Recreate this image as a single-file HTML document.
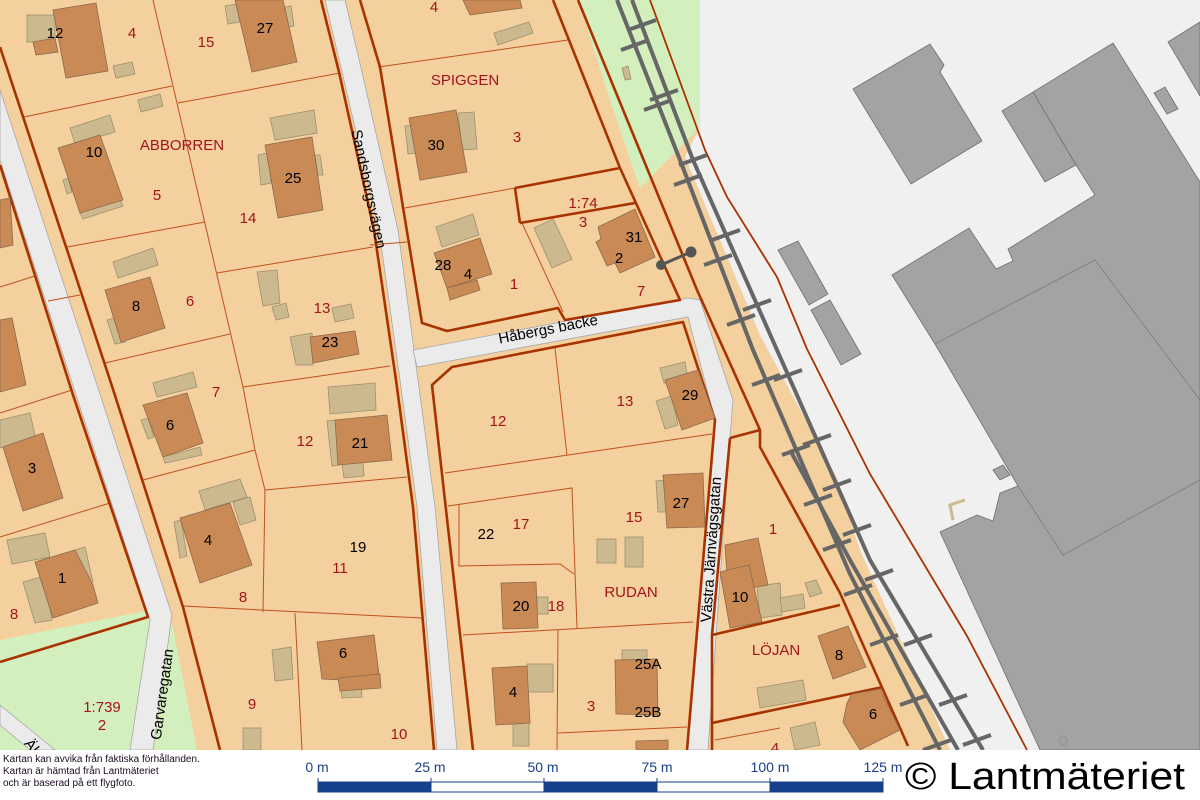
<!DOCTYPE html>
<html><head><meta charset="utf-8"><style>
html,body{margin:0;padding:0;background:#fff;width:1200px;height:800px;overflow:hidden}
svg{display:block}
.r{fill:#a3141c;font-family:"Liberation Sans",sans-serif;font-size:15px;text-anchor:middle}
.b{fill:#000;font-family:"Liberation Sans",sans-serif;font-size:15px;text-anchor:middle}
.h{fill:#c98a56;stroke:#8c6a4c;stroke-width:.8}
.t{fill:#cdb98e;stroke:#9c9070;stroke-width:.8}
.g{fill:#a3a3a3;stroke:#6e6e6e;stroke-width:.8}
.th{fill:none;stroke:#a83200;stroke-width:2.6;stroke-linejoin:round}
.tn{fill:none;stroke:#c0501e;stroke-width:1}
.rd{fill:#ebebeb;stroke:#a8a8a8;stroke-width:.8}
.tr{fill:none;stroke:#666;stroke-width:4;stroke-linejoin:round}
.tie{stroke:#666;stroke-width:4}
</style></head><body>
<svg width="1200" height="800" viewBox="0 0 1200 800" xmlns="http://www.w3.org/2000/svg">
<rect x="0" y="0" width="1200" height="750" fill="#f3d09e"/>
<polygon points="578,0 700,0 700,127 640,188 610,100" fill="#d3efbd"/>
<polygon points="0,640 150,610 172,623 197,750 0,750" fill="#d3efbd"/>
<polygon points="700,0 1200,0 1200,750 950,750 860,550 837,478 760,335 685,157 700,127" fill="#f0f0f0"/>
<polygon class="g" points="853,89 930,44 944,65 940,72 982,141 911,184"/>
<polygon class="g" points="1002,111 1113,43 1200,182 1200,750 1040,750 940,532 977,515 993,521 1000,493 1018,486 935,344 892,275 969,228 996,269 1013,261 1008,249 1095,195 1076,165 1045,182"/>
<polyline points="1033,92 1076,165" fill="none" stroke="#6e6e6e" stroke-width=".8"/>
<polyline points="935,344 1095,260 1200,400" fill="none" stroke="#6e6e6e" stroke-width=".6"/>
<polyline points="1018,486 1063,555 1200,480" fill="none" stroke="#6e6e6e" stroke-width=".6"/>
<polygon class="g" points="1168,42 1200,22 1200,96"/>
<polygon class="g" points="1154,93 1165,87 1178,109 1167,114"/>
<polygon class="g" points="778,250 798,241 828,294 809,305"/>
<polygon class="g" points="811,310 830,300 861,354 841,365"/>
<polygon class="g" points="993,470 1003,465 1010,475 1000,480"/>
<polyline points="953,520 950,505 965,500" fill="none" stroke="#cdb98e" stroke-width="3"/>
<circle cx="1063" cy="741" r="4" fill="none" stroke="#9a9a9a" stroke-width="2.5"/>
<polygon class="rd" points="0,90 97,385 172,615 153,750 130,750 150,620 75,392 0,160"/>
<polygon class="rd" points="0,705 55,750 30,750 0,725"/>
<polygon class="rd" points="325,0 345,0 362,72 398,230 418,380 435,507 457,750 437,750 417,507 400,380 379,230 342,72"/>
<polygon class="rd" points="413,350 688,298 700,300 733,400 730,437 708,750 687,750 715,420 688,317 417,367"/>
<g class="tn">
<polyline points="153,0 243,387 255,450 265,490 263,612"/>
<polyline points="24,117 172,86"/><polyline points="178,103 340,73"/>
<polyline points="67,247 205,222"/><polyline points="217,273 373,247"/>
<polyline points="0,287 35,276"/><polyline points="48,301 80,295"/>
<polyline points="105,363 230,334"/><polyline points="243,387 390,366"/>
<polyline points="0,413 72,390"/><polyline points="0,537 110,503"/>
<polyline points="143,480 255,450"/><polyline points="265,490 407,477"/>
<polyline points="183,606 422,618"/><polyline points="295,613 302,750"/>
<polyline points="378,67 568,40"/><polyline points="405,208 515,188"/>
<polyline points="522,223 563,312"/><polyline points="370,245 407,242"/>
<polyline points="445,473 712,434"/><polyline points="555,348 567,455"/>
<polyline points="448,506 572,488 577,628"/>
<polyline points="459,505 459,566 560,564 574,574"/>
<polyline points="463,635 693,622"/><polyline points="558,630 557,750"/>
<polyline points="558,733 687,727"/>
<polyline points="715,740 780,728"/>
</g>
<g class="th">
<polyline points="0,47 110,380 183,607 220,750"/>
<polyline points="0,165 73,395 148,617 0,662"/>
<polyline points="321,0 339,72 374,230 396,380 413,507 434,750"/>
<polyline points="360,0 380,67 422,323 447,331 558,308 565,320 680,300 620,168 553,0"/>
<polyline points="515,188 620,168"/><polyline points="520,223 635,203"/><polyline points="515,188 520,223"/>
<polyline points="578,0 697,290 760,430 760,447 840,593 908,746"/>
<polyline points="473,750 432,385 452,367 683,322 715,420 687,750"/>
<polyline points="730,438 760,430"/>
<polyline points="730,438 712,635 712,750"/>
<polyline points="712,635 840,605"/><polyline points="712,723 883,687"/>
</g>
<polyline points="650,0 705,150 727,197 777,277 807,349 870,474 967,636 1027,750" fill="none" stroke="#a83200" stroke-width="1.8"/>
<polyline class="tr" points="617,0 680,160 753,350 850,574 940,750"/>
<polyline class="tr" points="632,0 693,160 777,350 870,560 983,750"/>
<polyline class="tr" points="790,450 850,560 958,750"/>
<g class="tie">
<line x1="621" y1="50" x2="649" y2="40"/><line x1="644" y1="110" x2="672" y2="100"/>
<line x1="674" y1="185" x2="702" y2="175"/><line x1="704" y1="265" x2="732" y2="255"/>
<line x1="727" y1="325" x2="755" y2="315"/><line x1="752" y1="385" x2="780" y2="375"/>
<line x1="782" y1="455" x2="810" y2="445"/><line x1="804" y1="505" x2="832" y2="495"/>
<line x1="823" y1="550" x2="851" y2="540"/><line x1="844" y1="595" x2="872" y2="585"/>
<line x1="870" y1="645" x2="898" y2="635"/><line x1="900" y1="705" x2="928" y2="695"/>
<line x1="923" y1="750" x2="951" y2="740"/>
<line x1="628" y1="30" x2="656" y2="20"/><line x1="650" y1="100" x2="678" y2="90"/>
<line x1="679" y1="165" x2="707" y2="155"/><line x1="712" y1="240" x2="740" y2="230"/>
<line x1="743" y1="310" x2="771" y2="300"/><line x1="774" y1="380" x2="802" y2="370"/>
<line x1="803" y1="445" x2="831" y2="435"/><line x1="823" y1="490" x2="851" y2="480"/>
<line x1="843" y1="535" x2="871" y2="525"/><line x1="865" y1="580" x2="893" y2="570"/>
<line x1="904" y1="645" x2="932" y2="635"/><line x1="939" y1="705" x2="967" y2="695"/>
<line x1="963" y1="745" x2="991" y2="735"/>
</g>
<g class="t">
<rect x="27" y="15" width="28" height="27"/><polygon points="113,66 132,62 135,74 116,78"/>
<polygon points="225,6 237,4 240,22 228,24"/><polygon points="285,7 291,6 294,26 288,27"/>
<polygon points="138,100 160,94 163,106 141,112"/>
<polygon points="70,128 110,115 115,132 75,144"/><polygon points="63,180 68,178 72,192 67,194"/>
<polygon points="80,213 120,200 123,206 83,219"/>
<polygon points="270,118 314,110 317,133 275,140"/><polygon points="258,155 268,153 271,183 261,185"/><polygon points="315,155 320,155 323,175 318,175"/>
<polygon points="113,262 153,248 158,265 118,278"/>
<polygon points="107,320 118,317 126,342 115,344"/>
<polygon points="257,272 277,270 280,303 263,306"/><polygon points="272,307 286,303 289,317 276,320"/>
<polygon points="332,308 351,304 354,318 335,322"/>
<polygon points="290,337 312,333 313,365 296,365"/>
<polygon points="494,33 529,22 533,33 498,45"/><polygon points="622,68 628,66 631,79 625,80"/>
<polygon points="458,113 474,112 477,149 462,150"/><polygon points="405,126 414,125 416,153 408,154"/>
<polygon points="436,227 473,214 479,235 442,247"/>
<polygon points="534,228 553,219 572,259 552,268"/>
<polygon points="153,383 193,372 197,387 157,397"/><polygon points="141,420 148,418 154,437 148,439"/>
<polygon points="163,457 200,447 202,455 165,463"/>
<polygon points="0,420 30,413 36,440 0,448"/>
<polygon points="328,387 375,383 376,410 330,414"/><polygon points="327,421 337,420 339,465 332,466"/><polygon points="342,463 363,462 364,476 344,478"/>
<polygon points="7,540 45,533 50,557 12,564"/><polygon points="23,582 45,576 52,620 35,623"/><polygon points="75,550 85,547 93,582 85,584"/>
<polygon points="199,491 240,479 247,497 205,510"/><polygon points="233,502 250,497 256,520 240,525"/><polygon points="174,522 181,520 187,556 180,558"/>
<polygon points="660,368 685,362 688,380 664,383"/><polygon points="656,401 672,396 678,425 665,429"/>
<polygon points="656,481 666,480 667,512 658,512"/>
<rect x="597" y="539" width="19" height="24"/><rect x="625" y="537" width="18" height="30"/>
<rect x="537" y="597" width="11" height="17"/>
<polygon points="272,650 291,647 293,679 275,681"/>
<polygon points="340,685 361,683 362,697 342,698"/>
<rect x="243" y="728" width="18" height="22"/>
<rect x="527" y="664" width="26" height="28"/><rect x="513" y="723" width="16" height="23"/>
<rect x="622" y="650" width="25" height="11"/>
<polygon points="757,586 780,583 782,615 760,618"/><polygon points="780,598 803,594 805,608 782,612"/><polygon points="805,583 816,580 822,593 810,597"/>
<polygon points="757,688 803,680 806,700 760,708"/><polygon points="790,728 815,722 820,745 795,750"/>
</g>
<g class="h">
<polygon points="53,10 96,3 108,71 66,78"/><polygon points="33,42 55,38 58,52 36,55"/>
<polygon points="235,0 283,0 297,62 252,72"/>
<polygon points="0,200 10,198 13,245 0,248"/>
<polygon points="58,148 100,135 123,200 80,213"/>
<polygon points="265,145 312,137 323,210 278,218"/>
<polygon points="409,118 456,110 467,172 420,180"/>
<polygon points="463,0 520,0 522,8 470,15"/>
<polygon points="105,290 150,277 165,328 121,342"/>
<polygon points="0,320 12,318 26,385 0,392"/>
<polygon points="310,337 355,331 359,354 313,363"/>
<polygon points="434,253 480,238 492,274 447,288"/><polygon points="447,288 477,280 480,290 450,300"/>
<polygon points="598,227 635,209 655,257 620,273 615,263 607,266 596,242 601,239"/>
<polygon points="143,405 187,393 203,443 163,457"/>
<polygon points="3,447 43,433 63,498 23,511"/>
<polygon points="335,420 387,415 392,460 338,465"/>
<polygon points="665,380 698,370 715,418 682,430"/>
<polygon points="180,518 230,503 252,565 200,583"/>
<polygon points="35,562 75,550 93,585 98,603 53,618"/>
<polygon points="663,475 703,473 705,527 667,528"/>
<polygon points="501,583 536,582 538,628 503,629"/>
<polygon points="725,545 758,538 768,585 728,592"/><polygon points="720,572 749,565 762,622 730,628"/>
<polygon points="818,636 848,626 866,667 833,679"/>
<polygon points="317,642 374,635 380,682 322,679"/><polygon points="338,678 380,674 381,688 340,691"/>
<polygon points="492,668 527,666 530,723 496,725"/>
<polygon points="615,660 657,659 658,715 616,714"/>
<polygon points="847,703 852,694 880,689 900,730 860,750 843,722"/>
<polygon points="636,741 668,740 668,750 636,750"/>
</g>
<line x1="661" y1="265" x2="691" y2="252" stroke="#555" stroke-width="3"/>
<circle cx="661" cy="265" r="5" fill="#555"/><circle cx="691" cy="252" r="5.5" fill="#555"/>
<text class="b" x="55" y="38">12</text><text class="r" x="132" y="38">4</text><text class="r" x="206" y="47">15</text>
<text class="b" x="265" y="33">27</text><text class="r" x="434" y="12">4</text>
<text class="r" x="465" y="85">SPIGGEN</text><text class="b" x="436" y="150">30</text><text class="r" x="517" y="142">3</text>
<text class="b" x="94" y="157">10</text><text class="r" x="182" y="150">ABBORREN</text><text class="b" x="293" y="183">25</text>
<text class="r" x="157" y="200">5</text><text class="r" x="248" y="223">14</text>
<text class="r" x="583" y="208">1:74</text><text class="r" x="583" y="227">3</text>
<text class="b" x="634" y="242">31</text><text class="b" x="619" y="263">2</text>
<text class="b" x="443" y="270">28</text><text class="b" x="468" y="279">4</text><text class="r" x="514" y="289">1</text>
<text class="b" x="136" y="311">8</text><text class="r" x="190" y="306">6</text><text class="r" x="322" y="313">13</text>
<text class="b" x="330" y="347">23</text><text class="r" x="641" y="296">7</text>
<text class="r" x="498" y="426">12</text><text class="r" x="625" y="406">13</text><text class="b" x="690" y="400">29</text>
<text class="r" x="216" y="397">7</text><text class="b" x="170" y="430">6</text><text class="r" x="305" y="446">12</text>
<text class="b" x="360" y="448">21</text><text class="b" x="32" y="473">3</text>
<text class="b" x="681" y="508">27</text><text class="r" x="634" y="522">15</text><text class="r" x="773" y="534">1</text>
<text class="r" x="521" y="529">17</text><text class="b" x="486" y="539">22</text>
<text class="b" x="208" y="545">4</text><text class="b" x="358" y="552">19</text><text class="r" x="340" y="573">11</text>
<text class="b" x="62" y="583">1</text><text class="r" x="631" y="597">RUDAN</text>
<text class="b" x="521" y="611">20</text><text class="r" x="556" y="611">18</text><text class="b" x="740" y="602">10</text>
<text class="r" x="243" y="602">8</text><text class="r" x="14" y="619">8</text>
<text class="r" x="776" y="655">LÖJAN</text><text class="b" x="839" y="660">8</text><text class="b" x="343" y="658">6</text>
<text class="b" x="648" y="669">25A</text><text class="r" x="102" y="712">1:739</text><text class="r" x="102" y="730">2</text>
<text class="r" x="252" y="709">9</text><text class="b" x="513" y="697">4</text><text class="r" x="591" y="711">3</text>
<text class="b" x="648" y="717">25B</text><text class="b" x="873" y="719">6</text><text class="r" x="399" y="739">10</text>
<text class="r" x="775" y="753">4</text>
<text class="b" transform="translate(364,190) rotate(78)">Sandsborgsvägen</text>
<text class="b" transform="translate(549,334) rotate(-11)">Håbergs backe</text>
<text class="b" transform="translate(716,550) rotate(-86)">Västra Järnvägsgatan</text>
<text class="b" transform="translate(167,695) rotate(-82)">Garvaregatan</text>
<text class="b" transform="translate(30,752) rotate(52)">Älv</text>
<rect x="0" y="750" width="1200" height="50" fill="#fff"/>
<g font-family="Liberation Sans, sans-serif" font-size="10" fill="#1a0a20">
<text x="3" y="762">Kartan kan avvika från faktiska förhållanden.</text>
<text x="3" y="774">Kartan är hämtad från Lantmäteriet</text>
<text x="3" y="786">och är baserad på ett flygfoto.</text>
</g>
<g font-family="Liberation Sans, sans-serif" font-size="14" fill="#1a3f8a" text-anchor="middle">
<text x="317" y="772">0 m</text><text x="430" y="772">25 m</text><text x="543" y="772">50 m</text>
<text x="657" y="772">75 m</text><text x="770" y="772">100 m</text><text x="883" y="772">125 m</text>
</g>
<rect x="318" y="782" width="565" height="10" fill="#fff" stroke="#163f8c" stroke-width="1"/>
<rect x="318" y="782" width="113" height="10" fill="#163f8c"/>
<rect x="544" y="782" width="113" height="10" fill="#163f8c"/>
<rect x="770" y="782" width="113" height="10" fill="#163f8c"/>
<g stroke="#163f8c" stroke-width="1"><line x1="318" y1="778" x2="318" y2="792"/><line x1="431" y1="778" x2="431" y2="792"/><line x1="544" y1="778" x2="544" y2="792"/><line x1="657" y1="778" x2="657" y2="792"/><line x1="770" y1="778" x2="770" y2="792"/><line x1="883" y1="778" x2="883" y2="792"/></g>
<text x="905" y="789" font-family="Liberation Sans, sans-serif" font-size="38" fill="#000" textLength="280" lengthAdjust="spacingAndGlyphs">© Lantmäteriet</text>
</svg>
</body></html>
